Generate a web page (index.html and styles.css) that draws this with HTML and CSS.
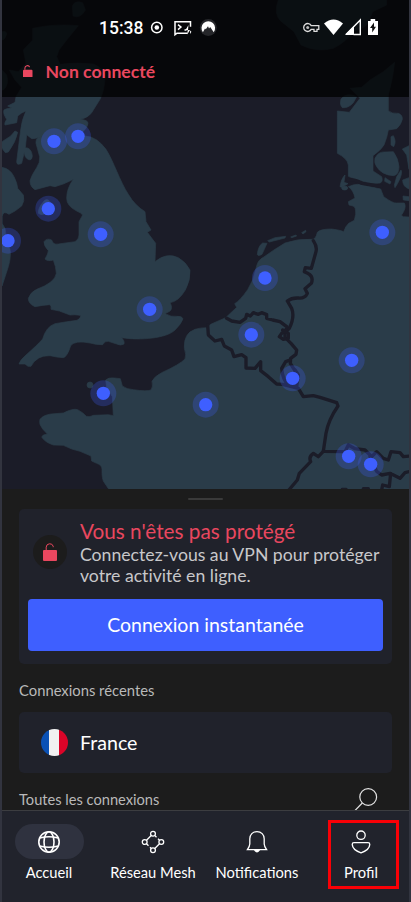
FILE: index.html
```html
<!DOCTYPE html>
<html lang="fr">
<head>
<meta charset="utf-8">
<meta name="viewport" content="width=device-width, initial-scale=1">
<title>VPN</title>
<link rel="stylesheet" href="styles.css">
</head>
<body>
<div class="phone">
  <section class="map">
    <svg class="map-canvas" viewBox="6 0 1221 1467" aria-hidden="true">
      <g class="land">
        <path d="M235 77L200 120L177 150L170 170L180 193Q230 186 280 192Q313 205 315 232Q314 270 300 298L275 338Q264 353 240 358Q264 360 264 370Q264 382 246 398L256 408Q290 410 318 448C340 482 360 545 385 583Q405 617 435 635L438 665L453 690L442 697L467 730L465 785Q500 756 535 773Q558 786 570 810Q572 840 556 870Q535 905 510 908Q520 925 509 934L495 941Q515 952 530 949Q545 947 549 956Q545 970 525 990C500 1015 420 1022 365 1013Q375 1023 372 1032Q362 1038 350 1032L325 1024Q315 1022 308 1034Q290 1035 270 1029Q225 1020 212 1037Q202 1070 190 1073Q170 1072 150 1067Q110 1065 93 1099L84 1099L75 1092H57Q60 1080 78 1065Q110 1037 128 1017Q138 980 165 971Q200 965 231 961Q245 953 240 946Q225 943 210 945L178 933L153 928Q155 918 149 914Q130 915 105 920Q85 912 85 895Q92 876 110 868Q165 848 169 820Q168 800 160 780Q143 785 135 777Q145 760 145 752Q131 737 132 725Q140 713 155 720Q159 735 175 732L225 725Q237 718 237 705V665L248 645Q243 638 230 633Q200 618 200 595Q200 565 220 538Q190 554 165 560L150 557L105 569Q90 560 90 542Q95 525 110 503Q121 487 119 470L108 430Q107 414 119 411Q105 417 95 416L80 404L76 443Q94 443 97 467Q96 482 86 479Q73 473 73 456L65 490Q50 498 50 485Q55 445 62 390Q65 360 78 333Q65 337 53 348L50 368L15 375Q12 370 20 358Q8 340 12 330Q18 325 35 324L23 318L45 307L48 290L65 262L45 240L28 210L55 215L78 190L70 150L98 120V85Q165 70 235 77Z"/>
        <path d="M6 502Q30 506 42 530Q52 550 53 565L70 585Q75 602 65 618Q45 635 27 643Q10 630 6 650V670L15 685Q18 720 30 748Q34 770 25 800L12 840L6 858Z"/>
        <path d="M6 425L32 408L45 393L53 397Q48 425 25 456L16 458L6 445Z M6 95Q20 92 20 102Q15 120 6 120Z M217 18Q225 0 248 8L256 30Q242 57 219 48Z M6 210L20 225Q28 255 10 270H6Z M115 640Q113 625 132 603Q143 593 151 607Q158 620 141 635Q128 650 115 640Z"/>
        <circle cx="270" cy="1155" r="9"/>
        <path d="M835 0Q820 40 841 62L882 95L903 135Q950 158 1000 145Q1040 125 1060 93Q1105 85 1110 55L1118 35L1160 15V0Z"/>
        <path d="M1184 187Q1180 230 1165 285V332Q1175 342 1195 340Q1208 345 1207 358Q1203 375 1190 386L1165 390Q1162 410 1152 435Q1143 450 1119 467V513L1145 530Q1150 545 1140 549Q1120 552 1100 547L1060 535L1045 529V495Q1042 475 1012 460V333L1048 337L1080 295L1050 265L1085 262L1110 240L1150 215Z"/>
        <path d="M1023 297Q1040 275 1070 290L1060 308Q1045 325 1027 323Q1018 315 1023 297Z"/>
        <path d="M1125 475Q1135 454 1155 456L1180 455Q1195 475 1197 500Q1197 525 1180 527Q1145 525 1130 500Q1122 490 1125 475Z M1173 410L1180 407Q1190 425 1181 440L1173 435Z M1183 556L1190 530L1203 510Q1209 520 1193 550L1185 563Z M1227 437L1207 447L1220 465L1227 508Z M1227 533L1208 540Q1208 560 1227 567Z M1209 588L1227 590V602L1210 600Z M1155 533L1173 545L1170 552L1154 544Z M1020 560Q1024 535 1035 525L1032 547L1044 551L1025 562Z"/>
        <ellipse cx="1034" cy="564" rx="9" ry="6"/>
        <path d="M772 764Q774 738 788 729L801 730L786 763Q776 770 772 764Z M803 722L825 713L857 709L855 714L808 726Z M872 711L887 705L890 708L875 713Z M905 698L917 691L918 695L909 702Z"/>
        <path d="M1045 560Q1075 547 1100 558L1142 567L1151 590Q1180 611 1190 609L1213 609Q1221 622 1204 646L1210 650L1227 651V1470H328L313 1448Q305 1439 306 1407Q305 1395 290 1390L275 1383L273 1368L240 1354L215 1347L190 1336L160 1335Q135 1327 125 1311L130 1305L142 1302L128 1287Q115 1272 120 1258Q130 1245 153 1242L190 1239Q220 1224 233 1229Q250 1238 259 1249Q270 1252 280 1246L325 1244L340 1247L337 1190L320 1163L317 1140Q325 1132 343 1134L361 1136L367 1158Q380 1168 400 1169Q440 1175 453 1170Q460 1160 456 1144Q462 1130 485 1118Q540 1093 555 1077Q560 1065 553 1045Q550 1000 585 988Q600 983 620 983L632 973L677 953L710 922L704 911Q720 902 743 869L758 840L770 798Q774 780 790 772Q820 750 855 729Q895 715 935 718Q947 720 952 697Q960 687 995 687Q1020 690 1031 695Q1037 678 1046 670L1063 661L1067 643Q1068 620 1059 618L1047 615L1045 605L1065 594Q1060 570 1045 560Z"/>
      </g>
      <g class="borders">
        <path d="M1045 539Q1070 539 1085 550L1145 559"/>
        <path d="M940 722Q952 740 948 755L934 805L916 803L913 815L923 820Q942 830 934 850L915 866L922 880Q915 896 895 894Q875 893 862 903L875 925Q885 950 868 985L855 998L855 1012L873 1030L890 1050L888 1063L872 1075L871 1090L890 1120"/>
        <path d="M680 955L695 963L720 967L737 955L740 943L751 948L760 938L775 943L785 938L800 944L800 955L818 960L840 965L860 980L858 990L845 1000L838 1010L850 1018L865 1015L865 1000L848 990"/>
        <path d="M623 975L625 1005L645 1023L665 1018L673 1038L695 1050L702 1070L725 1064L738 1073L738 1104L765 1105L782 1085V1112L805 1130L830 1152L848 1153L895 1165L910 1190L940 1187L960 1192L1010 1208L1014 1218Q985 1260 978 1300L970 1354L1035 1355L1045 1335L1065 1346L1095 1350L1115 1370L1130 1355L1150 1375L1165 1380L1173 1355L1200 1358L1210 1370L1230 1368"/>
        <path d="M870 1080L857 1085L845 1105Q848 1140 865 1155L890 1160L895 1125L885 1110"/>
        <path d="M970 1354L955 1370L940 1360Q925 1370 932 1385L898 1420L892 1440L865 1472"/>
        <path d="M1110 1370L1130 1414L1145 1425L1170 1420L1200 1435L1215 1418L1230 1414 M1172 1420L1168 1460L1148 1455L1145 1470 M1027 1468H1038 M1090 1466H1105"/>
      </g>
      <defs>
        <g id="pin"><circle class="halo" r="39"/><circle class="dot" r="20"/></g>
      </defs>
      <use href="#pin" x="162" y="424"/><use href="#pin" x="234" y="409"/>
      <use href="#pin" x="145" y="626"/><use href="#pin" x="24" y="722"/>
      <use href="#pin" x="302" y="703"/><use href="#pin" x="449" y="928"/>
      <use href="#pin" x="1147" y="697"/><use href="#pin" x="795" y="834"/>
      <use href="#pin" x="754" y="1004"/><use href="#pin" x="878" y="1135"/>
      <use href="#pin" x="1055" y="1081"/><use href="#pin" x="310" y="1180"/>
      <use href="#pin" x="617" y="1214"/><use href="#pin" x="1046" y="1369"/>
      <use href="#pin" x="1112" y="1393"/>
    </svg>
    <header class="topbar">
      <div class="statusbar">
        <span class="clock">15:38</span>
        <svg class="status-left" viewBox="148 16 72 24" aria-hidden="true">
          <circle cx="156.8" cy="27.5" r="5.2" fill="none" stroke="#fff" stroke-width="1.5"/><circle cx="156.8" cy="27.5" r="2.3" fill="#fff"/>
          <path d="M187.5 33.2H177l-2 1.5V21.8h15.5v5" fill="none" stroke="#fff" stroke-width="1.5"/>
          <path d="M178 24.6l3 2.5-3 2.5M184.5 30h2" fill="none" stroke="#fff" stroke-width="1.4"/>
          <path d="M188.5 25l-3 5h2.2l-.5 4.5 2.8-4.5h-2zM190 30.5l1.4 1.3-1.2 2.2" fill="#fff"/>
          <circle cx="208.3" cy="27.4" r="8.5" fill="#25262a"/>
          <path d="M202.9 32.2A6.8 6.8 0 1 1 213.7 32.2L210.2 27l-1.2 1.4-1-2.2-2.2 3-.8-.8z" fill="#fff"/>
        </svg>
        <svg class="status-right" viewBox="300 16 82 24" aria-hidden="true">
          <path d="M311.2 25.6a4 4 0 1 0 0 3.8h2.8v1.9h3v-1.9h1.8v-3.8z" fill="none" stroke="#ddd" stroke-width="1.3"/><circle cx="307.7" cy="27.5" r="1.5" fill="#bbb"/>
          <path d="M324 23.5Q333.5 15.5 343 23.5L333.5 35z" fill="#fff"/>
          <path d="M346 34.5L360.3 20V34.5H353.5" fill="none" stroke="#fff" stroke-width="1.4"/><path d="M345 35l9-9v9z" fill="#fff"/>
          <path d="M368 21h2.6v-2h4.6v2h2.8v14h-10z" fill="#fff"/><path d="M374 22.5l-4 5.5h2.2v4.5l3.8-5.7h-2z" fill="#111"/>
        </svg>
      </div>
      <div class="connection">
        <svg class="lock-small" viewBox="0 0 10 13" aria-hidden="true"><rect y="5" width="10" height="8" rx="1" fill="#e9475f"/><path d="M2 5V3.2a2.6 2.6 0 0 1 5-1" fill="none" stroke="#e9475f" stroke-width="1.1"/></svg>
        <span>Non connecté</span>
      </div>
    </header>
  </section>

  <main class="sheet">
    <div class="handle"></div>
    <section class="card status-card">
      <div class="status-row">
        <div class="lock-badge">
          <svg viewBox="0 0 14 18" aria-hidden="true"><rect y="7" width="14" height="11" rx="1" fill="#e9475f"/><path d="M3.2 7V4.2a3.6 3.6 0 0 1 7-1v1" fill="none" stroke="#e9475f" stroke-width="1"/></svg>
        </div>
        <div>
          <h1>Vous n'êtes pas protégé</h1>
          <p>Connectez-vous au VPN pour protéger votre activité en ligne.</p>
        </div>
      </div>
      <button class="quick">Connexion instantanée</button>
    </section>
    <h2 class="recent-title">Connexions récentes</h2>
    <section class="card country">
      <span class="flag"></span><span>France</span>
    </section>
    <div class="all-row">
      <h2>Toutes les connexions</h2>
      <svg class="search" viewBox="0 0 24 24" fill="none" stroke="#e4e4e4" stroke-width="1.2" aria-hidden="true"><circle cx="14.2" cy="10" r="8.4"/><path d="M8.3 16L1 23.5"/></svg>
    </div>
  </main>

  <nav class="tabs">
    <a class="tab active">
      <span class="pill"><svg viewBox="0 0 24 24" aria-hidden="true"><circle cx="12" cy="12" r="10.2"/><ellipse cx="12" cy="12" rx="5" ry="10.2"/><path d="M2.8 8Q12 5.6 21.2 8M2.8 16Q12 18.4 21.2 16"/></svg></span>
      <span>Accueil</span>
    </a>
    <a class="tab">
      <span class="pill"><svg viewBox="0 0 24 24" aria-hidden="true"><circle cx="12" cy="3.7" r="2.4"/><circle cx="3.7" cy="12" r="2.4"/><circle cx="20.3" cy="12" r="2.4"/><circle cx="12" cy="20.3" r="2.4"/><path d="M10.2 5.5L5.5 10.2M5.5 13.8L7.5 15.8M13.8 5.5L15.5 7.2M18.5 13.8L13.8 18.5M17 8.7l1.5 1.5M9 17.2l1.2 1.3"/></svg></span>
      <span>Réseau Mesh</span>
    </a>
    <a class="tab">
      <span class="pill"><svg viewBox="0 0 24 24" aria-hidden="true"><path d="M12 1.6C7.8 1.6 4.8 4.6 4.8 8.8V14Q4.8 16 2.4 19.7H21.6Q19.2 16 19.2 14V8.8C19.2 4.6 16.2 1.6 12 1.6Z"/><path d="M10 20.5Q12 23.4 14 20.5Z" fill="#fff"/></svg></span>
      <span>Notifications</span>
    </a>
    <a class="tab">
      <span class="pill"><svg viewBox="0 0 24 24" aria-hidden="true"><circle cx="12" cy="5.2" r="4.2"/><path d="M5 12.6H19Q20.8 12.6 20.8 14.4Q20.5 20 12 22.8Q3.5 20 3.2 14.4Q3.2 12.6 5 12.6Z"/></svg></span>
      <span>Profil</span>
      <span class="highlight"></span>
    </a>
  </nav>
</div>
</body>
</html>
```
FILE: styles.css
```css
* { box-sizing: border-box; }
body {
  margin: 0;
  font-family: Lato, "Liberation Sans", sans-serif;
  color: #fff;
  background: #32343f;
}
h1, h2, p { margin: 0; font-weight: 400; }

.phone {
  display: flex;
  flex-direction: column;
  width: 411px;
  height: 902px;
  padding: 0 2px;
  overflow: hidden;
}

.map {
  position: relative;
  flex: none;
  height: 489px;
  overflow: hidden;
  background: #1b1c28;
}
.map-canvas { display: block; width: 407px; height: 489px; }
.land { fill: #2a3c49; stroke: #2a3c49; stroke-width: 2; stroke-linejoin: round; }
.borders { fill: none; stroke: #1b1c28; stroke-width: 10; stroke-linejoin: round; stroke-linecap: round; }
.halo { fill: #3e5fff; opacity: .25; }
.dot { fill: #3e5fff; }

.topbar {
  position: absolute;
  inset: 0 0 auto;
  height: 97px;
  background: rgba(0, 0, 0, .75);
}
.statusbar {
  display: flex;
  align-items: center;
  height: 24px;
  margin-top: 16px;
  padding: 0 27px 0 97px;
}
.clock { width: 49px; font: 500 17.5px/24px Roboto, sans-serif; white-space: nowrap; }
.status-left { width: 72px; height: 24px; }
.status-right { width: 82px; height: 24px; margin-left: auto; }
.connection {
  display: flex;
  align-items: center;
  gap: 13px;
  height: 24px;
  margin: 19px 0 0 21px;
  color: #e9475f;
  font-size: 17.6px;
  font-weight: 700;
}
.lock-small { width: 9.5px; height: 12.5px; }

.sheet {
  display: flex;
  flex: none;
  flex-direction: column;
  height: 321px;
  padding: 9px 17px 0;
  overflow: hidden;
  background: #1c1c1c;
}
.handle { flex: none; width: 35px; height: 2px; margin: 0 auto 9px; background: #3a3a3a; border-radius: 1px; }
.card { flex: none; background: #20222b; border-radius: 5px; }
.status-card { height: 155px; padding: 10px 9px 0; }
.status-row { display: flex; height: 80px; }
.lock-badge {
  display: flex;
  flex: none;
  align-items: center;
  justify-content: center;
  width: 34px;
  height: 34px;
  margin: 16px 13px 0 5px;
  background: #1c1c1c;
  border-radius: 50%;
}
.lock-badge svg { width: 14px; height: 18px; }
.status-row h1 { font-size: 20.75px; line-height: 25px; color: #e9475f; white-space: nowrap; }
.status-row p { width: 304px; margin-top: 1px; font-size: 17.65px; line-height: 20.5px; color: #c8c8ca; font-variant-ligatures: none; }
.quick {
  display: block;
  width: 355px;
  height: 52px;
  padding: 0 0 1px;
  border: 0;
  border-radius: 4px;
  background: #3e5fff;
  color: #fff;
  font: 400 19.5px/51px Lato, sans-serif;
}
.sheet h2 { font-size: 14.8px; line-height: 20px; color: #b9b9b9; }
.recent-title { margin: 16px 0 12px; }
.country { display: flex; align-items: center; gap: 12px; height: 61px; padding: 0 22px; font-size: 19.6px; }
.flag { width: 27px; height: 27px; border-radius: 50%; background: linear-gradient(90deg, #0a51b5 31%, #f1f1f1 31% 67%, #db0428 67%); }
.all-row { display: flex; justify-content: space-between; padding-top: 14px; }
.sheet .all-row h2 { padding-top: 3px; font-size: 14.65px; }
.search { width: 24px; height: 24px; margin-right: 14.5px; }

.tabs {
  display: flex;
  flex: none;
  height: 92px;
  padding-top: 13px;
  border-top: 1px solid #3c3d40;
  background: #21232c;
}
.tab {
  position: relative;
  display: flex;
  flex: none;
  flex-direction: column;
  align-items: center;
  width: 104px;
  font-size: 14.7px;
  line-height: 20px;
  white-space: nowrap;
}
.tab:first-child { margin-left: -5px; }
.pill {
  display: flex;
  align-items: center;
  justify-content: center;
  width: 69px;
  height: 35px;
  margin-bottom: 3px;
  border-radius: 18px;
}
.active .pill { background: #2f323f; }
.pill svg { width: 24px; height: 24px; fill: none; stroke: #fff; stroke-width: 1.3; }
.active .pill svg { stroke-width: 1.6; }
.highlight { position: absolute; top: -4px; left: 18.5px; width: 71px; height: 69px; border: 3px solid #f90006; }
```
